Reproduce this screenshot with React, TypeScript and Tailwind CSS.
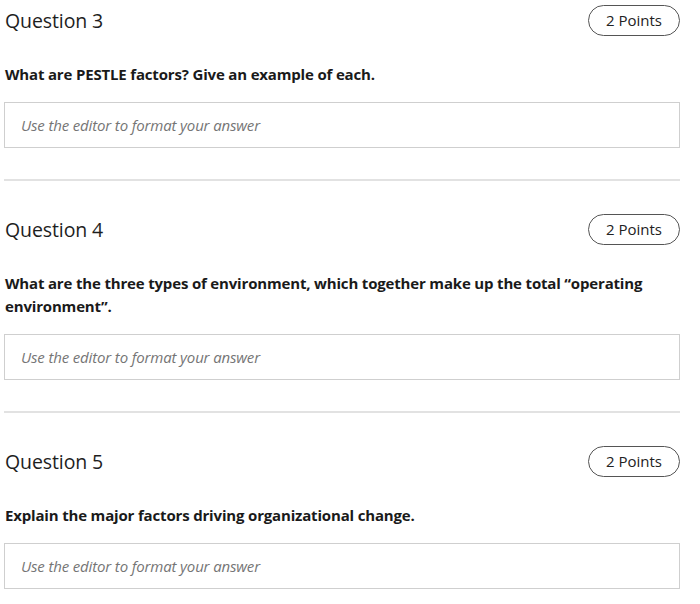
import React from "react";

type Q = { n: number; prompt: string };

const questions: Q[] = [
  { n: 3, prompt: "What are PESTLE factors? Give an example of each." },
  {
    n: 4,
    prompt:
      "What are the three types of environment, which together make up the total \u201coperating environment\u201d.",
  },
  { n: 5, prompt: "Explain the major factors driving organizational change." },
];

function Question({ q, last }: { q: Q; last: boolean }) {
  return (
    <div>
      <div className="flex items-center justify-between h-[31px]">
        <h2 className="text-[19.5px] leading-[28px] tracking-[-0.1px] text-[#1e1e1e] pl-[1px]">Question {q.n}</h2>
        <div className="h-[31px] w-[92px] rounded-full border border-[#555] flex items-center justify-center text-[15px] font-medium text-[#222]">
          2 Points
        </div>
      </div>
      <p className="mt-[27px] pl-[1px] pr-[20px] text-[15px] leading-[23px] font-bold tracking-[-0.17px] text-[#1a1a1a]">
        {q.prompt}
      </p>
      <div className="mt-[16px] h-[46px] border border-[#cfcfcf] flex items-center pl-[16px]">
        <span className="italic text-[15px] tracking-[-0.15px] text-[#757575]">Use the editor to format your answer</span>
      </div>
      {!last && <div className="mt-[31px] mb-[33px] h-[2px] bg-[#e2e2e2]" />}
    </div>
  );
}

export default function App() {
  return (
    <div
      className="bg-white w-[700px] h-[604px] overflow-hidden pt-[5px] pl-[4px] pr-[20px]"
      style={{ fontFamily: '"Open Sans", sans-serif' }}
    >
      {questions.map((q, i) => (
        <Question key={q.n} q={q} last={i === questions.length - 1} />
      ))}
    </div>
  );
}
